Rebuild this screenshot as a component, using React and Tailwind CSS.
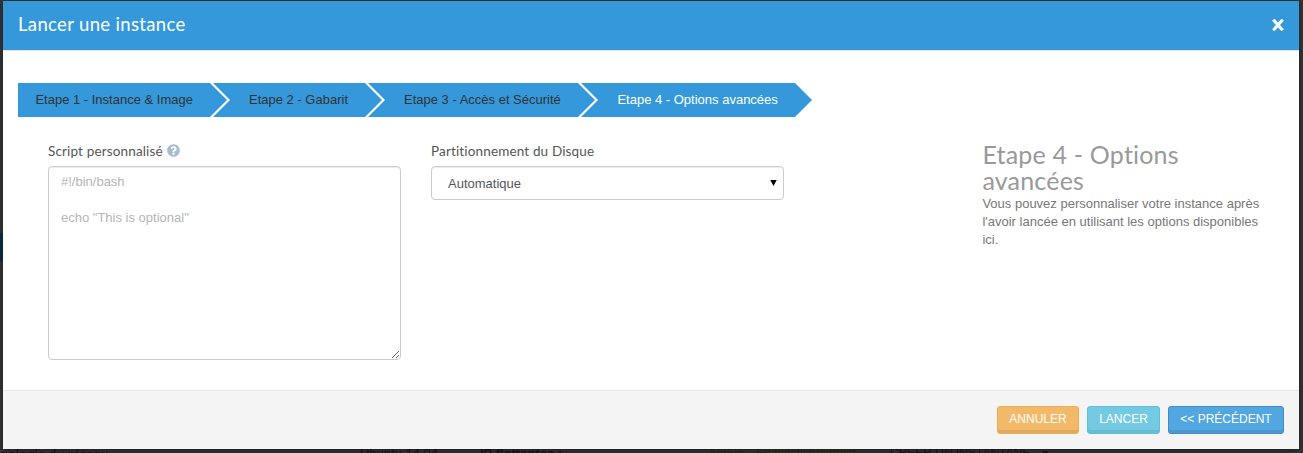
import React from "react";
import { FaQuestionCircle } from "react-icons/fa";

const stepBase = "flex h-[34px] shrink-0 items-center bg-[#3498db] text-[13px] leading-[18px]";
const steps = [
  { label: "Etape 1 - Instance & Image", cls: "w-[209px] pl-[17.4px] text-[#333] [clip-path:polygon(0_0,192px_0,100%_50%,192px_100%,0_100%)]" },
  { label: "Etape 2 - Gabarit", cls: "-ml-[14px] w-[169px] pl-[36px] text-[#333] [clip-path:polygon(0_0,152px_0,100%_50%,152px_100%,0_100%,17px_50%)]" },
  { label: "Etape 3 - Accès et Sécurité", cls: "-ml-[14px] w-[227px] pl-[36px] text-[#333] [clip-path:polygon(0_0,210px_0,100%_50%,210px_100%,0_100%,17px_50%)]" },
  { label: "Etape 4 - Options avancées", cls: "-ml-[14px] w-[231px] pl-[36.4px] text-white [clip-path:polygon(0_0,214px_0,100%_50%,214px_100%,0_100%,17px_50%)]" },
];

function Header() {
  return (
    <header className="flex h-[50px] shrink-0 items-center justify-between border-b border-[#e5e5e5] bg-[#3498db] px-[15px] text-white">
      <h3 className="pb-[3px] font-[Lato] text-[18.5px] leading-[26px] tracking-[0.35px]">Lancer une instance</h3>
      <button className="flex w-3 items-center justify-center pb-[2px]" aria-label="Fermer">
        <svg width="12" height="12" viewBox="0 0 12 12"><path d="M2.3 1.8 9.7 10.2M9.7 1.8 2.3 10.2" stroke="white" strokeWidth="3.1" strokeLinecap="square" /></svg>
      </button>
    </header>
  );
}

function Steps() {
  return (
    <nav className="flex pl-[15px]">
      {steps.map((s) => (
        <div key={s.label} className={`${stepBase} ${s.cls}`}>{s.label}</div>
      ))}
    </nav>
  );
}

function Fields() {
  return (
    <div className="flex pt-[25px] pl-[45px]">
      <div className="w-[353px]">
        <label className="flex h-[19px] items-center gap-1 font-[Lato] text-[13.5px] leading-[19px] tracking-[0.15px] text-[#555]">
          <span>Script personnalisé</span>
          <FaQuestionCircle className="-mt-[2px] size-[13px] text-[#a7bacf]" />
        </label>
        <textarea
          className="mt-[5px] block h-[194px] w-[353px] resize rounded border border-[#ccc] px-3 py-[6px] text-[13px] leading-[18px] shadow-[inset_0_1px_1px_rgba(0,0,0,0.075)] placeholder:text-[#b5b5b5]"
          placeholder={'#!/bin/bash\n\necho "This is optional"'}
        />
      </div>
      <div className="ml-[30px] w-[353px]">
        <label className="block h-[19px] font-[Lato] text-[13.5px] leading-[19px] tracking-[0.15px] text-[#555]">Partitionnement du Disque</label>
        <div className="mt-[5px] flex h-[34px] items-center justify-between rounded border border-[#ccc] pr-[6px] pl-4 text-[13px] text-[#555] shadow-[inset_0_1px_1px_rgba(0,0,0,0.075)]">
          <span className="pt-[2px]">Automatique</span>
          <svg className="mb-px" width="7" height="6" viewBox="0 0 7 6"><path d="M0.3 0H6.7L3.5 6Z" fill="black" /></svg>
        </div>
      </div>
      <aside className="ml-[198.4px] w-[290px] text-[#777]">
        <h4 className="-mt-px mb-[2px] font-[Lato] text-[25px] leading-[26px] tracking-[0.2px] text-[#999]">Etape 4 - Options<br />avancées</h4>
        <p className="text-[13px] leading-[18px]">Vous pouvez personnaliser votre instance après l'avoir lancée en utilisant les options disponibles ici.</p>
      </aside>
    </div>
  );
}

const btn = "h-7 rounded-[3px] border text-[12px] leading-[24px] text-white flex justify-center";

function Footer() {
  return (
    <footer className="flex h-[59px] shrink-0 justify-end gap-2 border-t border-[#e5e5e5] bg-[#f4f4f4] pt-[15px] pr-[15px]">
      <button className={`${btn} w-[82px] border-[#f0ad4e] bg-[#f1b968] shadow-[inset_0_-3px_0_#deaa60]`}>ANNULER</button>
      <button className={`${btn} w-[73px] border-[#5bc0de] bg-[#74cae3] shadow-[inset_0_-3px_0_#6bbad1]`}>LANCER</button>
      <button className={`${btn} w-[116px] border-[#428bca] bg-[#52a7e0] shadow-[inset_0_-3px_0_#4b99ce]`}>&lt;&lt; PRÉCÉDENT</button>
    </footer>
  );
}

export default function App() {
  return (
    <div className="flex h-[453px] w-[1303px] flex-col overflow-hidden bg-[#333435] pt-px font-['Liberation_Sans',Arial,sans-serif]">
      <div className="flex">
        <div className="flex h-[448px] w-[3px] shrink-0 flex-col">
          <div className="mt-[232px] h-7 bg-[#0c2d45]" />
        </div>
        <main className="flex h-[448px] w-[1296px] shrink-0 flex-col bg-white shadow-[0_2px_6px_rgba(0,0,0,0.4)]">
          <Header />
          <div className="flex flex-1 flex-col pt-[32px]">
            <Steps />
            <Fields />
          </div>
          <Footer />
        </main>
      </div>
      <div className="relative flex h-1 overflow-hidden text-[13px] leading-[9px] whitespace-nowrap text-[#111213]">
        <span className="w-[360px] shrink-0 font-[Lato] text-[14px]">pologie du réseau</span>
        <span className="w-[120px] shrink-0">Ubuntu 14.04</span>
        <span className="w-[228px] shrink-0 font-bold">IP flottantes :</span>
        <span className="w-[48px] shrink-0 text-[#20240f]">Active</span>
        <span className="w-[134px] shrink-0 text-[12px] text-[#20240f]">En fonctionnement</span>
        <span className="text-[12px]">CRÉER UN INSTANTANÉ</span>
        <span className="ml-[10px] text-[10px]">▼</span>
      </div>
    </div>
  );
}
